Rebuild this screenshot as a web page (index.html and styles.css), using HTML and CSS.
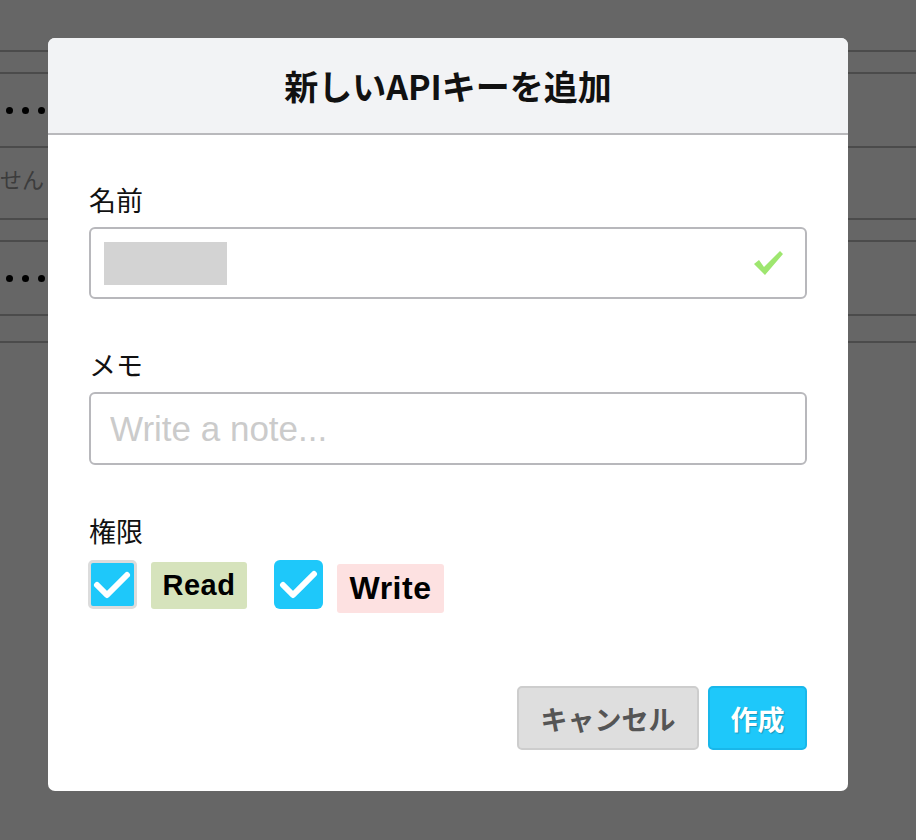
FILE: index.html
```html
<!DOCTYPE html>
<html lang="ja">

<head>
  <meta charset="UTF-8">
  <meta name="viewport" content="width=device-width, initial-scale=1.0">
  <title>APIキー</title>
  <link rel="stylesheet" href="styles.css">
</head>

<body>
  <!-- 背景のキー一覧 -->
  <div class="page">
    <div class="row row-head"></div>
    <div class="row row-key"><span class="dots"><i></i><i></i><i></i></span></div>
    <div class="row row-note"><span class="note">せん</span></div>
    <div class="row row-head"></div>
    <div class="row row-key"><span class="dots"><i></i><i></i><i></i></span></div>
    <div class="row row-end"></div>
  </div>

  <div class="modal">
    <div class="modal-header">新しいAPIキーを追加</div>

    <form class="modal-body">
      <div class="field">
        <label class="label">名前</label>
        <div class="input input-valid">
          <span class="redacted"></span>
          <svg class="valid-icon" width="30" height="26" viewBox="0 0 30 26">
            <path d="M1 14 L6 10 L11 17 L27 1 L30 4 L12 25 Z" fill="#9ee66f" />
          </svg>
        </div>
      </div>

      <div class="field">
        <label class="label" for="memo">メモ</label>
        <input id="memo" class="input" type="text" placeholder="Write a note...">
      </div>

      <div class="field field-last">
        <label class="label label-tight">権限</label>
        <div class="perms">
          <span class="check check-focus">
            <svg width="43" height="43" viewBox="0 0 43 43">
              <polyline points="6,22 16,32 36,12" fill="none" stroke="#fff" stroke-width="6" stroke-linecap="round" stroke-linejoin="round" />
            </svg>
          </span>
          <span class="tag tag-read">Read</span>
          <span class="check">
            <svg width="49" height="49" viewBox="0 0 49 49">
              <polyline points="9,25 19,35 40,14" fill="none" stroke="#fff" stroke-width="6" stroke-linecap="round" stroke-linejoin="round" />
            </svg>
          </span>
          <span class="tag tag-write">Write</span>
        </div>
      </div>

      <div class="actions">
        <button type="button" class="btn btn-cancel">キャンセル</button>
        <button type="submit" class="btn btn-create">作成</button>
      </div>
    </form>
  </div>
</body>

</html>
```

FILE: styles.css
```css
body {
  margin: 0;
  background-color: #666666;
  font-family: "Noto Sans CJK JP", "Noto Sans", sans-serif;
  height: 840px;
  overflow: hidden;
}

/* 背景 */
.page {
  padding-top: 50px;
}

.row {
  border-top: 2px solid #4b4b4b;
  box-sizing: border-box;
  display: flex;
  align-items: center;
}

.row-head {
  height: 22px;
}

.row-key {
  height: 74px;
}

.row-note {
  height: 72px;
}

.row-end {
  height: 29px;
  border-bottom: 2px solid #4b4b4b;
}

.dots {
  display: flex;
  gap: 9px;
  padding-left: 6px;
}

.dots i {
  width: 7px;
  height: 7px;
  border-radius: 50%;
  background-color: #000;
}

.note {
  font-size: 22px;
  color: #3c3c3c;
  margin-top: -10px;
}

/* モーダル */
.modal {
  position: fixed;
  top: 38px;
  left: 48px;
  width: 800px;
  background-color: #ffffff;
  border-radius: 7px;
  overflow: hidden;
}

.modal-header {
  height: 95px;
  background-color: #f2f3f5;
  border-bottom: 2px solid #b9b9bc;
  display: flex;
  align-items: center;
  justify-content: center;
  font-size: 34px;
  font-weight: bold;
  color: #111;
}

.modal-body {
  padding: 48px 41px 41px;
  margin: 0;
}

.field {
  margin-bottom: 49px;
}

.field-last {
  margin-bottom: 73px;
}

.label {
  display: block;
  font-size: 27px;
  line-height: 34px;
  color: #111;
  margin-bottom: 10px;
}

.label-tight {
  margin-bottom: 12px;
}

.input {
  display: flex;
  align-items: center;
  width: 100%;
  height: 72px;
  box-sizing: border-box;
  border: 2px solid #b8b8bc;
  border-radius: 6px;
  padding: 0 22px 0 13px;
  background-color: #fff;
  font-family: "Liberation Sans", sans-serif;
  font-size: 35px;
  color: #333;
  outline: none;
}

input.input {
  height: 73px;
  padding-left: 19px;
}

.input::placeholder {
  color: #cbcbcb;
}

.input-valid {
  justify-content: space-between;
}

.redacted {
  width: 123px;
  height: 43px;
  background-color: #d3d3d3;
}

.perms {
  display: flex;
  align-items: flex-start;
  height: 53px;
}

.check {
  width: 49px;
  height: 49px;
  box-sizing: border-box;
  border-radius: 6px;
  background-color: #1ec8fa;
  display: flex;
  align-items: center;
  justify-content: center;
  margin-left: -1px;
}

.check-focus {
  border: 3px solid #dcdcdc;
  border-radius: 5px;
}

.tag {
  font-family: "Liberation Sans", sans-serif;
  font-weight: bold;
  color: #000;
  border-radius: 3px;
  display: flex;
  align-items: center;
  justify-content: center;
  box-sizing: border-box;
}

.tag-read {
  margin: 2px 28px 0 14px;
  width: 96px;
  height: 47px;
  background-color: #d6e3bc;
  font-size: 29px;
  letter-spacing: 0.5px;
}

.tag-write {
  margin: 4px 0 0 14px;
  width: 107px;
  height: 49px;
  background-color: #fde1e1;
  font-size: 32px;
  letter-spacing: 0.5px;
}

.actions {
  display: flex;
  justify-content: flex-end;
  gap: 9px;
}

.btn {
  height: 64px;
  border-radius: 5px;
  font-family: "Noto Sans CJK JP", sans-serif;
  font-size: 27px;
  font-weight: bold;
  cursor: pointer;
}

.btn-cancel {
  width: 182px;
  background-color: #dedede;
  border: 2px solid #cdcdcd;
  color: #555555;
}

.btn-create {
  width: 99px;
  background-color: #1ec8fa;
  border: 2px solid #19b7ea;
  color: #ffffff;
  text-shadow: 1px 1px 1px rgba(0, 0, 0, 0.25);
}
```
